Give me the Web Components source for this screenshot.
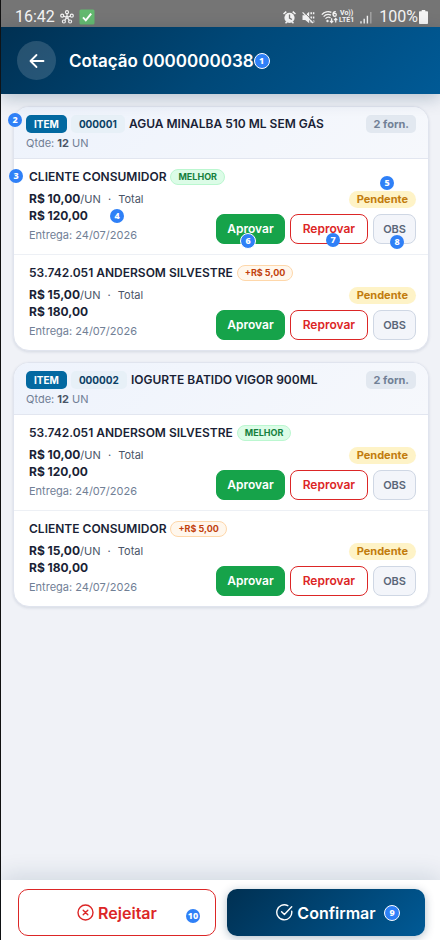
<!DOCTYPE html>
<html lang="pt-BR">
<head>
<meta charset="utf-8">
<meta name="viewport" content="width=device-width, initial-scale=1">
<title>Cotação 0000000038</title>
<style>
  * { box-sizing: border-box; }
  body { margin: 0; font-family: Inter, "Liberation Sans", sans-serif; color: #1a1f36; background: #f0f2f7; }
</style>
</head>
<body>
<quote-app></quote-app>

<script>
const define = (name, html, setup) => {
  const template = document.createElement('template');
  template.innerHTML = '<style>*{box-sizing:border-box}:host{box-sizing:border-box}</style>' + html;
  customElements.define(name, class extends HTMLElement {
    connectedCallback() {
      if (this.shadowRoot) return;
      const root = this.attachShadow({ mode: 'open' });
      root.append(template.content.cloneNode(true));
      if (setup) setup(this, root);
    }
  });
};

/* Numbered guide marker */
define('guide-marker', `
<style>
  :host { display: inline-flex; align-items: center; justify-content: center; flex: none;
    width: 14px; height: 14px; border-radius: 50%; background: #2f80f7; color: #fff;
    font: 800 9px/12px "Noto Sans", sans-serif; z-index: 2; pointer-events: none; }
  :host([ring]) { width: 16px; height: 16px; border: 1px solid #fff; }
</style><slot></slot>`);

/* Phone status bar */
define('status-bar', `
<style>
  :host { display: flex; align-items: center; justify-content: space-between; height: 27px;
    padding: 7px 12px 0 14px; background: #757575; color: #f4f4f4; font: 16px/20px Roboto, sans-serif; }
  div { display: flex; align-items: center; }
  .left { gap: 5px; }
  .right { gap: 6px; }
  .net { display: flex; flex-direction: column; font: 700 7px/7px Roboto, sans-serif; text-align: center; }
  .charge, .radio { display: flex; align-items: center; gap: 1px; }
  svg { display: block; flex: none; }
</style>
<div class="left">
  <span>16:42</span>
  <svg width="14" height="14" viewBox="0 0 14 14" fill="none" stroke="#f4f4f4" stroke-width="1.2">
    <circle cx="7" cy="2.2" r="1.5"/><circle cx="2.2" cy="5.7" r="1.5"/><circle cx="11.8" cy="5.7" r="1.5"/>
    <circle cx="3.9" cy="11.5" r="1.5"/><circle cx="10.1" cy="11.5" r="1.5"/><circle cx="7" cy="7.3" r="1"/>
    <path d="M7 3.7v2.6M3.7 6.2l2.3.8M10.3 6.2L8 7M4.7 10.3l1.6-2.1M9.3 10.3L7.7 8.2"/>
  </svg>
  <svg width="16" height="16" viewBox="0 0 16 16"><rect x=".5" y=".5" width="15" height="15" rx="1.5" fill="#63b96f"/><path d="M4 8.4l2.8 3L12.2 4.6" fill="none" stroke="#fff" stroke-width="1.9"/></svg>
</div>
<div class="right">
  <svg width="13" height="13" viewBox="0 0 13 13"><path d="M.5 3L3.3.7M12.5 3L9.7.7M2.5 12.3l1.6-1.6M10.5 12.3L8.9 10.7" stroke="#f4f4f4" stroke-width="1.6"/><circle cx="6.5" cy="6.8" r="5.1" fill="#f4f4f4"/><path d="M6.5 3.6v3.5l2.4 1.4" fill="none" stroke="#757575" stroke-width="1.3"/></svg>
  <svg width="13" height="13" viewBox="0 0 13 13"><path d="M.5 4.2h2.7L7.2.8v11.4L3.2 8.9H.5z" fill="#f4f4f4"/><path d="M9.2 1.3v2M9.2 5.4v2M9.2 9.6v2M11.6 1.3v2M11.6 5.4v2M11.6 9.6v2" stroke="#f4f4f4" stroke-width="1.5"/><path d="M1.6.6l10.4 10.8" stroke="#757575" stroke-width="1"/><path d="M.6 1.4l10.4 10.6" stroke="#f4f4f4" stroke-width="1.1"/></svg>
  <span class="radio"><svg width="17" height="14" viewBox="0 0 17 14"><g fill="none" stroke="#f4f4f4" stroke-width="1.3"><path d="M.8 4.6C3.4 1.6 7.5 1 10.4 2.4M2.6 6.6C4.6 4.5 7.5 4 10 5.2M4.5 8.6c1.5-1.5 3.5-1.7 5-.7"/><path d="M14.8 1.6c-2-.2-2.8 1-2.8 2.7 0 2.7 3.3 2.3 3.3.4 0-1.5-2.2-1.7-3.1-.3M10.6 8.3v4M9 10.9l1.6 1.7 1.6-1.7M14.7 12.6v-4M13.1 10.1l1.6-1.7 1.6 1.7"/></g><circle cx="6.5" cy="11" r="1.2" fill="#f4f4f4"/></svg>
  <span class="net"><span>Vo))</span><span>LTE1</span></span></span>
  <svg width="13" height="13" viewBox="0 0 13 13"><path d="M1 10.3v2.2M4.2 7.8v4.7M7.4 4.8v7.7" stroke="#f4f4f4" stroke-width="1.4"/><path d="M10.8 1v11.5" stroke="#a6a6a6" stroke-width="1.4"/></svg>
  <span class="charge"><span>100%</span>
  <svg width="9" height="14" viewBox="0 0 9 14"><path d="M2.7 0h3.6v1.3H8c.6 0 1 .4 1 1V13c0 .6-.4 1-1 1H1c-.6 0-1-.4-1-1V2.3c0-.6.4-1 1-1h1.7z" fill="#f4f4f4"/></svg></span>
</div>`);

/* Blue page header with a back button */
define('page-header', `
<style>
  :host { display: flex; align-items: center; height: 67px; padding: 0 16px; position: relative; z-index: 1;
    background: linear-gradient(135deg, #003052 0%, #004878 50%, #005a96 100%); color: #fff;
    box-shadow: 0 4px 16px rgba(0, 48, 82, .25); }
  button { display: grid; place-items: center; width: 39px; height: 39px; padding: 0; margin-right: 13px;
    border: 0; border-radius: 50%; background: rgba(255, 255, 255, .15); color: #fff; }
  h1 { margin: 0; font-size: 17px; line-height: 24px; font-weight: 600; }
</style>
<button type="button" aria-label="Voltar"><svg width="16" height="16" viewBox="0 0 16 16" fill="none" stroke="currentColor" stroke-width="1.8" stroke-linecap="round" stroke-linejoin="round"><path d="M14.5 8h-13M7.5 2L1.5 8l6 6"/></svg></button>
<h1><slot></slot></h1><guide-marker ring>1</guide-marker>`);

/* Card of one quoted item */
define('quote-item', `
<style>
  :host { display: block; position: relative; border: 1px solid #e0e4ee; border-radius: 16px; background: #fff;
    box-shadow: 0 1px 3px rgba(20, 40, 80, .12); }
  header { padding: 8px 12px 6px; border-bottom: 1px solid #e2e6f0; border-radius: 15px 15px 0 0;
    background: linear-gradient(135deg, #eef3fc, #f6f8fc); }
  .line { display: flex; align-items: center; gap: 4px; }
  .tag, .code, .count { font-size: 10px; line-height: 18px; border-radius: 5px; padding: 0 8px; flex: none; }
  .tag { background: #0369a1; color: #fff; font-weight: 700; }
  .code { background: #e7f0f7; color: #0c4065; font-weight: 700; }
  .count { background: #e2e8f0; color: #718096; font-weight: 700; font-size: 11px; padding: 0 7px; margin-left: auto; }
  h2 { margin: 0; font-size: 12px; line-height: 18px; font-weight: 600; }
  p { margin: 2px 0 0; font-size: 11px; line-height: 17px; color: #718096; }
  b { font-weight: 700; color: #4a5568; }
  guide-marker { position: absolute; left: -6px; top: 6px; }
</style>
<header>
  <div class="line"><span class="tag">ITEM</span><span class="code"></span><h2></h2><span class="count">2 forn.</span></div>
  <p>Qtde: <b>12</b> UN</p>
</header>
<slot></slot>`, (host, root) => {
  root.querySelector('.code').textContent = host.getAttribute('code');
  root.querySelector('h2').textContent = host.getAttribute('name');
  if (host.hasAttribute('guided')) root.append(Object.assign(document.createElement('guide-marker'), { textContent: '2' }));
});

/* One supplier offer within an item */
define('supplier-offer', `
<style>
  :host { display: block; position: relative; padding: 9px 12px 10px 15px; border-bottom: 1px solid #edf0f5; }
  :host(:last-child) { border-bottom: 0; }
  .title { display: flex; align-items: center; gap: 4px; height: 17px; }
  h3 { margin: 0; font-size: 12px; line-height: 17px; font-weight: 600; }
  .badge { font-size: 9px; line-height: 14px; font-weight: 700; padding: 0 7px; border: 1px solid #bbf7d0;
    border-radius: 9px; background: #dcfce7; color: #15803d; }
  .badge.extra { background: #fff7ed; border-color: #fed7aa; color: #c2410c; }
  .body { display: flex; justify-content: space-between; margin-top: 5px; }
  .info { padding-top: 1px; font-size: 11px; line-height: 17px; color: #4a5568; }
  .info p { margin: 0; }
  .info b { font-size: 12px; line-height: 1px; font-weight: 700; color: #1a1f36; }
  .info .date { margin-top: 2px; color: #718096; }
  .dot { margin: 0 4px; }
  .side { display: flex; flex-direction: column; align-items: flex-end; justify-content: flex-end; gap: 6px; }
  .state { padding: 0 8px; border-radius: 9px; background: #fef3c7; color: #c27c0e; font-size: 11px; line-height: 17px; font-weight: 700; }
  .actions { display: flex; gap: 5px; }
  button { height: 30px; padding: 0 10px; border: 1px solid #16a34a; border-radius: 8px; background: #16a34a; color: #fff; font: 600 12px/16px Inter, sans-serif; }
  .no { border-color: #dc2626; background: #fff; color: #dc2626; padding: 0 12px; }
  .obs { border-color: #cfd7e4; background: #f3f5fa; color: #5a6678; font-size: 11px; padding: 0 9px; }
  guide-marker { display: none; position: absolute; }
  :host([guided]) guide-marker { display: inline-flex; }
  .g3 { left: -5px; top: 10px; } .g4 { left: 96px; top: 50px; }
  .g5 { right: 34px; top: 17px; } .g6 { right: 172px; top: 74px; }
  .g7 { right: 88px; top: 74px; } .g8 { right: 24px; top: 76px; }
</style>
<div class="title"><h3></h3><span class="badge"></span></div>
<div class="body">
  <div class="info">
    <p><b class="price"></b>/UN <span class="dot">·</span> Total</p>
    <p><b class="total"></b></p>
    <p class="date">Entrega: 24/07/2026</p>
  </div>
  <div class="side">
    <span class="state">Pendente</span>
    <div class="actions"><button type="button">Aprovar</button><button type="button" class="no">Reprovar</button><button type="button" class="obs">OBS</button></div>
  </div>
</div>
<guide-marker class="g3">3</guide-marker><guide-marker class="g4">4</guide-marker>
<guide-marker class="g5">5</guide-marker><guide-marker class="g6" ring>6</guide-marker>
<guide-marker class="g7">7</guide-marker><guide-marker class="g8">8</guide-marker>`, (host, root) => {
  const best = host.hasAttribute('best');
  const badge = root.querySelector('.badge');
  root.querySelector('h3').textContent = host.getAttribute('name');
  badge.textContent = best ? 'MELHOR' : '+R$ 5,00';
  badge.classList.toggle('extra', !best);
  root.querySelector('.price').textContent = best ? 'R$ 10,00' : 'R$ 15,00';
  root.querySelector('.total').textContent = best ? 'R$ 120,00' : 'R$ 180,00';
});

/* Bottom bar with the final decision */
define('decision-bar', `
<style>
  :host { display: grid; grid-template-columns: 1fr 1fr; gap: 11px; padding: 9px 15px 4px 17px; position: sticky; bottom: 0;
    background: #fff; box-shadow: 0 -4px 24px rgba(0, 48, 82, .14); }
  button { display: flex; align-items: center; justify-content: center; gap: 4px; height: 47px; padding: 0; position: relative;
    border: 1px solid #dc2626; border-radius: 10px; background: #fff; color: #dc2626; font: 600 16px/20px Inter, sans-serif; }
  .ok { border: 0; color: #fff; background: linear-gradient(135deg, #003052, #005a96); box-shadow: 0 2px 10px rgba(0, 48, 82, .3); }
  svg { fill: none; stroke: currentColor; stroke-width: 1.4; stroke-linecap: round; stroke-linejoin: round; }
  guide-marker { position: absolute; right: 15px; bottom: 12px; }
  .ok guide-marker { right: 25px; bottom: 15px; }
</style>
<button type="button"><svg width="17" height="17" viewBox="0 0 17 17"><circle cx="8.5" cy="8.5" r="7.5"/><path d="M6.2 6.2l4.6 4.6M10.8 6.2l-4.6 4.6"/></svg><span>Rejeitar</span><guide-marker>10</guide-marker></button>
<button type="button" class="ok"><svg width="17" height="17" viewBox="0 0 17 17"><path d="M15.7 7.2A7.5 7.5 0 1 1 11.8 1.7M5.6 7.7l2.8 2.8 7.3-7.8"/></svg><span>Confirmar</span><guide-marker ring>9</guide-marker></button>`);

define('quote-app', `
<style>
  :host { display: flex; flex-direction: column; min-height: 100vh; border-left: 1px solid #111; }
  main { flex: 1; display: flex; flex-direction: column; gap: 11px; padding: 12px 11px 12px 12px; }
</style>
<status-bar></status-bar>
<page-header>Cotação 0000000038</page-header>
<main>
  <quote-item code="000001" name="AGUA MINALBA 510 ML SEM GÁS" guided>
    <supplier-offer name="CLIENTE CONSUMIDOR" best guided></supplier-offer>
    <supplier-offer name="53.742.051 ANDERSOM SILVESTRE"></supplier-offer>
  </quote-item>
  <quote-item code="000002" name="IOGURTE BATIDO VIGOR 900ML">
    <supplier-offer name="53.742.051 ANDERSOM SILVESTRE" best></supplier-offer>
    <supplier-offer name="CLIENTE CONSUMIDOR"></supplier-offer>
  </quote-item>
</main>
<decision-bar></decision-bar>`);
</script>
</body>
</html>
